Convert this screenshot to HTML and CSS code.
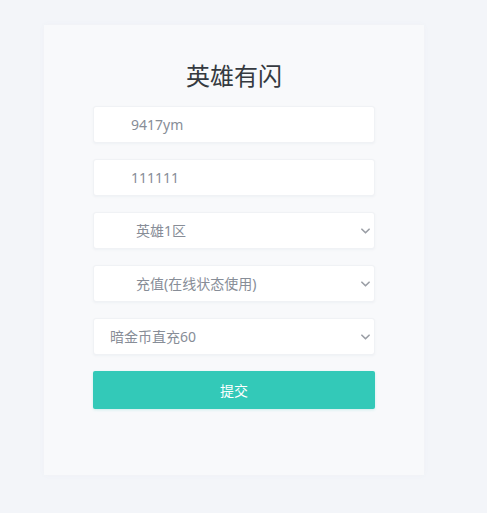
FILE: index.html
```html
<!DOCTYPE html>
<html lang="zh-CN">
<head>
<meta charset="utf-8">
<title>英雄有闪</title>
<link rel="stylesheet" href="styles.css">
</head>
<body>
<div class="card">
  <h1 class="title">英雄有闪</h1>
  <form class="form">
    <input class="field indent-lg" type="text" value="9417ym">
    <input class="field indent-lg" type="text" value="111111">
    <div class="select-wrap">
      <select class="field select indent-xl"><option>英雄1区</option></select>
      <svg class="chev" viewBox="0 0 10 6" width="9" height="6"><path d="M1 1l4 4 4-4" fill="none" stroke="#9a9ea5" stroke-width="1.8" stroke-linecap="round" stroke-linejoin="round"/></svg>
    </div>
    <div class="select-wrap">
      <select class="field select indent-xl"><option>充值(在线状态使用)</option></select>
      <svg class="chev" viewBox="0 0 10 6" width="9" height="6"><path d="M1 1l4 4 4-4" fill="none" stroke="#9a9ea5" stroke-width="1.8" stroke-linecap="round" stroke-linejoin="round"/></svg>
    </div>
    <div class="select-wrap">
      <select class="field select indent-sm"><option>暗金币直充60</option></select>
      <svg class="chev" viewBox="0 0 10 6" width="9" height="6"><path d="M1 1l4 4 4-4" fill="none" stroke="#9a9ea5" stroke-width="1.8" stroke-linecap="round" stroke-linejoin="round"/></svg>
    </div>
    <button class="submit" type="button">提交</button>
  </form>
</div>
</body>
</html>
```
FILE: styles.css
```css
html, body {
  margin: 0;
  padding: 0;
}
body {
  background: #f3f5f9;
  font-family: "Noto Sans", "Noto Sans CJK SC", sans-serif;
  width: 487px;
  height: 513px;
  overflow: hidden;
}
.card {
  margin: 25px 0 0 44px;
  width: 380px;
  height: 450px;
  box-sizing: border-box;
  background: #f8f9fb;
  box-shadow: 0 0 4px rgba(236, 238, 243, 0.6);
  padding-top: 33px;
  display: flex;
  flex-direction: column;
  align-items: center;
}
.title {
  margin: 0;
  font-size: 24px;
  font-weight: 400;
  line-height: 34px;
  color: #353a40;
  font-family: "Noto Sans CJK SC", sans-serif;
}
.form {
  width: 282px;
  margin-top: 14px;
  display: flex;
  flex-direction: column;
  gap: 16px;
}
.field {
  display: block;
  width: 100%;
  height: 37px;
  box-sizing: border-box;
  border: 1px solid #f0f2f5;
  border-radius: 3px;
  background: #ffffff;
  box-shadow: 0 1px 2px rgba(232, 235, 240, 0.6);
  font-family: "Noto Sans", "Noto Sans CJK SC", sans-serif;
  font-size: 14px;
  color: #878d97;
  outline: none;
  margin: 0;
}
.indent-lg { padding-left: 37px; }
.indent-xl { padding-left: 42px; }
.indent-sm { padding-left: 16px; }
.select-wrap {
  position: relative;
}
.select {
  appearance: none;
  -webkit-appearance: none;
}
.chev {
  position: absolute;
  right: 5px;
  top: 16px;
  pointer-events: none;
}
.submit {
  height: 38px;
  width: 100%;
  border: none;
  border-radius: 2px;
  background: #33c9b8;
  color: #ffffff;
  font-family: "Noto Sans CJK SC", sans-serif;
  font-size: 14px;
  font-weight: 400;
  box-shadow: 0 1px 3px rgba(51, 201, 184, 0.2);
  cursor: pointer;
}
```
